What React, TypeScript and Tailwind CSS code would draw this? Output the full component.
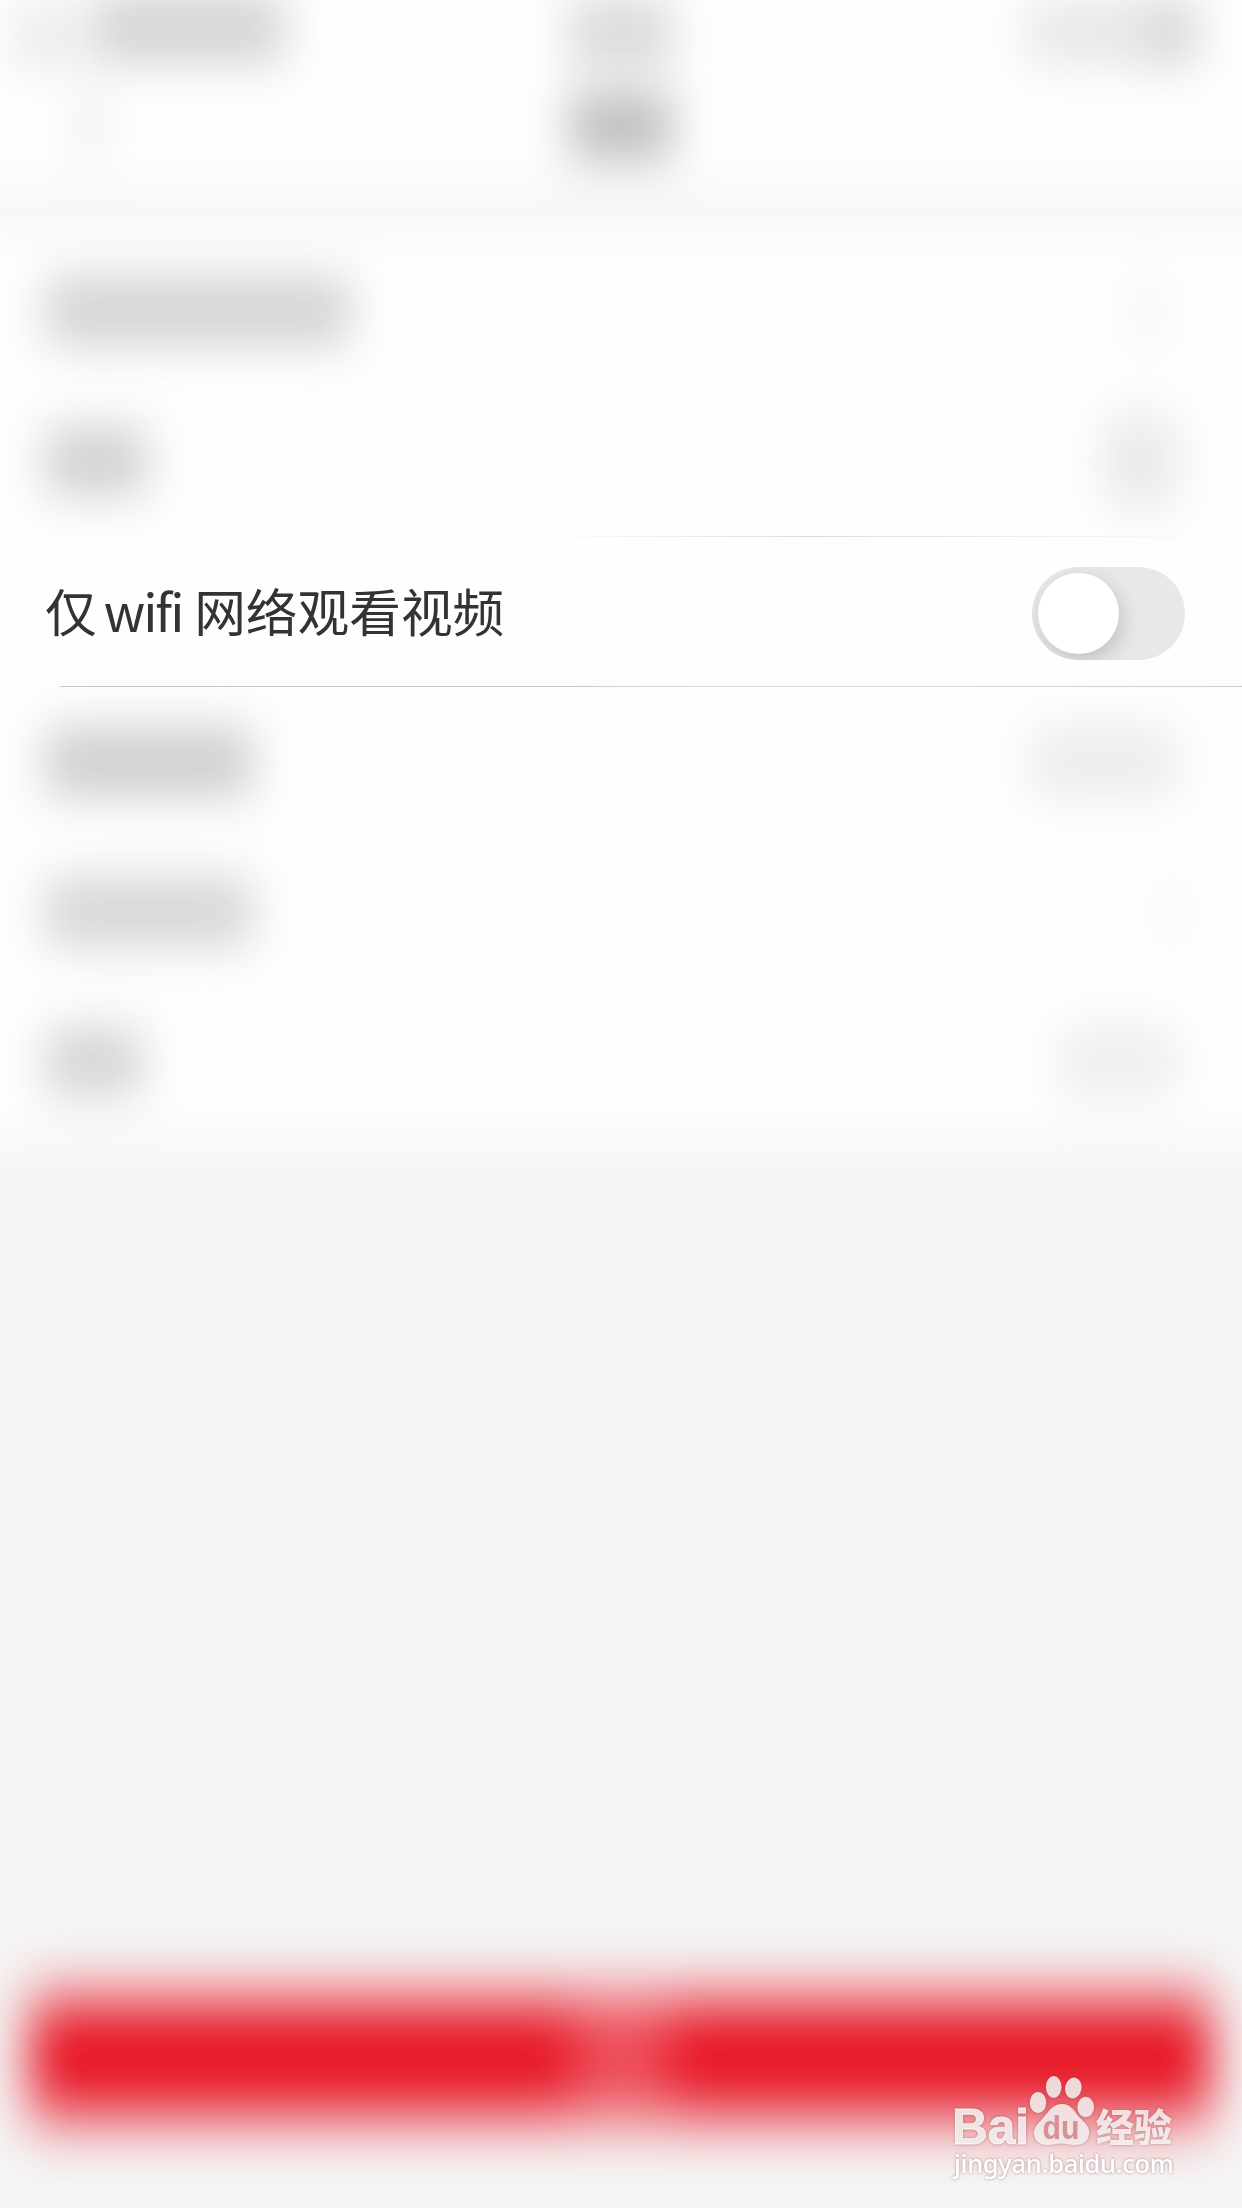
import { clsx } from "clsx";

// stretched after the blur, so the softness runs further vertically
function Smudge({ className }: { className: string }) {
  return <div className={clsx("shrink-0 scale-y-125 blur-[23px]", className)} />;
}

function StatusBar() {
  return (
    <div className="flex h-[64px] items-center justify-between pr-[44px] pl-[12px]">
      <div className="flex w-[280px] items-center gap-[14px]">
        <Smudge className="mt-2 h-[28px] w-[66px] bg-[#dcdcdc]" />
        <Smudge className="-mt-2 h-[36px] w-[192px] bg-[#bcbcbc]" />
      </div>
      <Smudge className="ml-[32px] h-[36px] w-[102px] bg-[#c6c6c6]" />
      <div className="flex w-[280px] items-center justify-end">
        <Smudge className="h-[30px] w-[110px] bg-[#d8d8d8]" />
        <Smudge className="h-[32px] w-[62px] bg-[#bebebe]" />
      </div>
    </div>
  );
}

function TitleBar() {
  return (
    <div className="grid h-[124px] grid-cols-3 items-center">
      <Smudge className="ml-[78px] h-[36px] w-[24px] bg-[#e0e0e0]" />
      <Smudge className="h-[40px] w-[102px] justify-self-center bg-[#a4a4a4]" />
    </div>
  );
}

function BlurredRow({ label, value }: { label: string; value: string }) {
  return (
    <div className="flex h-[150px] items-center justify-between pr-[66px] pl-[46px]">
      <Smudge className={clsx("h-[36px]", label)} />
      <Smudge className={value} />
    </div>
  );
}

function WifiRow() {
  return (
    <div className="relative z-10 flex h-[151px] flex-col">
      <div className="ml-[540px] h-px w-[680px] shrink-0 bg-linear-to-r from-transparent via-[#dcdcdc] via-40% to-transparent" />
      <div className="flex flex-1 items-center justify-between pr-[57px] pl-[45px]">
        <div className="-mt-[4px] flex items-baseline text-[51.7px] leading-none whitespace-pre text-[#333333]">
          <span>仅</span>
          <span className="ml-[7px] w-[90.5px] tracking-[-2px]">wifi</span>
          <span>网络观看视频</span>
        </div>
        <div className="mt-[3px] h-[93px] w-[153px] overflow-hidden rounded-full bg-[#e8e8ea] p-[6px]">
          <div className="size-[81px] rounded-full bg-white shadow-[3px_7px_20px_rgba(0,0,0,0.17)]" />
        </div>
      </div>
      <div className="ml-[60px] h-px shrink-0 bg-linear-to-r from-[#c6c6c6] from-40% via-[#e0e0e0] via-60% to-[#cccccc]" />
    </div>
  );
}

function Watermark() {
  return (
    <div className="absolute top-[2074px] left-[952px] w-[230px] text-white/80 drop-shadow-[0_0_1.5px_rgba(110,70,70,0.55)]">
      <svg width="230" height="110" viewBox="0 0 230 110" fill="currentColor">
        <text x="0" y="69.500" fontFamily="Liberation Sans" fontWeight="700" fontSize="50" textLength="77" lengthAdjust="spacingAndGlyphs" stroke="currentColor" strokeWidth="0.800">Bai</text>
        <ellipse cx="86" cy="28.500" rx="8.200" ry="10.500" />
        <ellipse cx="101.700" cy="13" rx="7.800" ry="11" />
        <ellipse cx="121.300" cy="14" rx="8.200" ry="10.500" transform="rotate(12 121.300 14)" />
        <ellipse cx="133.700" cy="33" rx="8.300" ry="10.200" />
        <path d="M110 30c9 0 12 7 17 13 5 5 11 9 10 17-1 8-7 11-14 11-6 0-9-1.500-14-1.500S101 71 95 71c-7 0-13-4-13-12 0-7 6-11 10-16 5-6 9-13 18-13Z" />
        <text x="90.500" y="65" fontFamily="Liberation Sans" fontWeight="700" fontSize="33" textLength="37" lengthAdjust="spacingAndGlyphs" fill="#d98f96">du</text>
        <text x="144" y="67" fontFamily="Noto Sans CJK SC" fontWeight="900" fontSize="38" textLength="76" lengthAdjust="spacingAndGlyphs">经验</text>
        <text x="2" y="99" fontFamily="Noto Sans" fontWeight="500" fontSize="25.500" textLength="220" lengthAdjust="spacing" fill="#ffffff">jingyan.baidu.com</text>
      </svg>
    </div>
  );
}

export default function App() {
  return (
    <div className="relative flex h-[2208px] w-[1242px] flex-col overflow-hidden bg-[#f5f5f5] font-['Noto_Sans_CJK_SC',sans-serif]">
      {/* header and list share one sheet, the gap between them is only a faint band */}
      <div className="bg-[linear-gradient(to_bottom,#fefefe_0px,#fefefe_150px,#f8f8f8_205px,#f8f8f8_215px,#fefefe_265px,#fefefe_1100px,#f5f5f5_1175px)] pb-[40px]">
        <StatusBar />
        <TitleBar />
        <div className="h-[48px]" />
        <BlurredRow label="w-[304px] bg-[#bcbcbc]" value="mr-[14px] h-[30px] w-[28px] bg-[#eaeaea]" />
        <BlurredRow label="w-[100px] bg-[#b8b8b8]" value="h-[64px] w-[70px] bg-[#e5e5e5]" />
        <WifiRow />
        <BlurredRow label="w-[206px] bg-[#b4b4b4]" value="h-[38px] w-[144px] bg-[#e3e3e3]" />
        <BlurredRow label="w-[206px] bg-[#c0c0c0]" value="-mr-[6px] h-[30px] w-[20px] bg-[#eeeeee]" />
        <BlurredRow label="w-[96px] bg-[#bebebe]" value="h-[38px] w-[116px] bg-[#e6e6e6]" />
      </div>

      <div className="mt-auto mb-[106px] px-[30px]">
        <div className="flex h-[88px] scale-y-130 items-center justify-center bg-[#e70e1e] blur-[25px]">
          <div className="h-[70px] w-[98px] bg-white/25" />
        </div>
      </div>
      <Watermark />
    </div>
  );
}
